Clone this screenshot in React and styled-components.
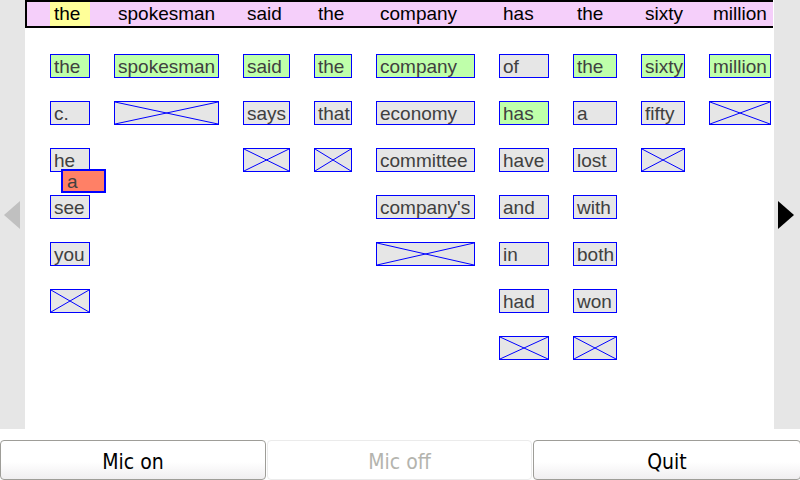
import React from 'react';
import styled, { createGlobalStyle } from 'styled-components';

const GlobalStyle = createGlobalStyle`
  html, body { margin: 0; padding: 0; background: #ffffff; }
  body { font-family: "Liberation Sans", Arial, sans-serif; }
`;

const columns = [
  { head: 'the', width: 40, current: true, words: [['the', 'hit'], ['c.'], ['he'], ['see'], ['you'], [null]] },
  { head: 'spokesman', width: 105, words: [['spokesman', 'hit'], [null]] },
  { head: 'said', width: 47, words: [['said', 'hit'], ['says'], [null]] },
  { head: 'the', width: 38, words: [['the', 'hit'], ['that'], [null]] },
  { head: 'company', width: 99, words: [['company', 'hit'], ['economy'], ['committee'], ["company's"], [null]] },
  { head: 'has', width: 50, words: [['of'], ['has', 'hit'], ['have'], ['and'], ['in'], ['had'], [null]] },
  { head: 'the', width: 44, words: [['the', 'hit'], ['a'], ['lost'], ['with'], ['both'], ['won'], [null]] },
  { head: 'sixty', width: 44, words: [['sixty', 'hit'], ['fifty'], [null]] },
  { head: 'million', width: 62, words: [['million', 'hit'], [null]] },
];

const Screen = styled.div`
  width: 800px;
  height: 480px;
  display: flex;
  flex-direction: column;
  overflow: hidden;
`;

const Main = styled.div`
  height: 429px;
  display: flex;
`;

const Side = styled.div`
  width: ${p => p.$w}px;
  background: #e6e6e6;
  display: flex;
  align-items: center;
  justify-content: ${p => (p.$right ? 'flex-end' : 'flex-start')};
  padding: ${p => (p.$right ? '0 6px 0 0' : '0 0 0 4px')};
  box-sizing: border-box;
`;

const Arrow = styled.div`
  width: 0;
  height: 0;
  border-top: 14.5px solid transparent;
  border-bottom: 14.5px solid transparent;
  ${p => (p.$right
    ? 'border-left: 16px solid #000000;'
    : 'border-right: 16px solid #c0c0c0;')}
`;

const Canvas = styled.div`
  flex: 1;
  position: relative;
  background: #ffffff;
`;

const Header = styled.div`
  height: 28px;
  margin-right: 1px;
  box-sizing: border-box;
  background: #f5cffa;
  border: 2px solid #000000;
  border-right: none;
  display: flex;
  gap: 24px;
  padding-left: 23px;
`;

const HeadWord = styled.div`
  width: ${p => p.$w}px;
  box-sizing: border-box;
  padding-left: 4px;
  font-size: 19px;
  line-height: 24px;
  color: #000000;
  background: ${p => (p.$current ? '#ffff99' : 'transparent')};
`;

const Grid = styled.div`
  display: flex;
  gap: 24px;
  padding: 26px 0 0 25px;
  align-items: flex-start;
`;

const Column = styled.div`
  width: ${p => p.$w}px;
  display: flex;
  flex-direction: column;
  gap: 23px;
`;

const WordBox = styled.div`
  position: relative;
  height: 24px;
  box-sizing: border-box;
  border: 1px solid #0000ff;
  padding-left: 3px;
  font-size: 19px;
  line-height: 23px;
  color: #404040;
  white-space: nowrap;
  background: ${p => (p.$hit ? '#bfffaa' : '#e6e6e6')};
`;

const Cross = styled.svg`
  position: absolute;
  inset: 0;
  width: 100%;
  height: 100%;
`;

const Dragged = styled.div`
  position: absolute;
  left: 36px;
  top: 169px;
  width: 45px;
  height: 24px;
  box-sizing: border-box;
  border: 2px solid #0000ff;
  background: #ff8066;
  padding-left: 4px;
  font-size: 19px;
  line-height: 21px;
  color: #404040;
`;

const Bar = styled.div`
  flex: 1;
  display: grid;
  grid-template-columns: 266px 265px 268px;
  column-gap: 1px;
  padding-top: 11px;
`;

const Button = styled.div`
  box-sizing: border-box;
  border: 1px solid ${p => (p.$disabled ? '#ebebeb' : '#9e9d98')};
  border-radius: 4px;
  background: ${p => (p.$disabled
    ? '#ffffff'
    : 'linear-gradient(#ffffff 0%, #ffffff 55%, #f0eef0 100%)')};
  color: ${p => (p.$disabled ? '#b4b4ae' : '#000000')};
  font-family: "DejaVu Sans Condensed", "DejaVu Sans", sans-serif;
  font-stretch: condensed;
  font-size: 21px;
  display: flex;
  align-items: center;
  justify-content: center;
  padding-top: 3px;
`;

function Word({ text, hit }) {
  if (text === null) {
    return (
      <WordBox>
        <Cross viewBox="0 0 100 100" preserveAspectRatio="none">
          <line x1="0" y1="0" x2="100" y2="100" stroke="#0000ff" strokeWidth="1" vectorEffect="non-scaling-stroke" />
          <line x1="100" y1="0" x2="0" y2="100" stroke="#0000ff" strokeWidth="1" vectorEffect="non-scaling-stroke" />
        </Cross>
      </WordBox>
    );
  }
  return <WordBox $hit={hit}>{text}</WordBox>;
}

export default function App() {
  return (
    <Screen>
      <GlobalStyle />
      <Main>
        <Side $w={25}><Arrow /></Side>
        <Canvas>
          <Header>
            {columns.map((c, i) => (
              <HeadWord key={i} $w={c.width} $current={c.current}>{c.head}</HeadWord>
            ))}
          </Header>
          <Grid>
            {columns.map((c, i) => (
              <Column key={i} $w={c.width}>
                {c.words.map(([t, h], j) => (
                  <Word key={j} text={t} hit={h === 'hit'} />
                ))}
              </Column>
            ))}
          </Grid>
          <Dragged>a</Dragged>
        </Canvas>
        <Side $w={26} $right><Arrow $right /></Side>
      </Main>
      <Bar>
        <Button>Mic on</Button>
        <Button $disabled>Mic off</Button>
        <Button>Quit</Button>
      </Bar>
    </Screen>
  );
}
